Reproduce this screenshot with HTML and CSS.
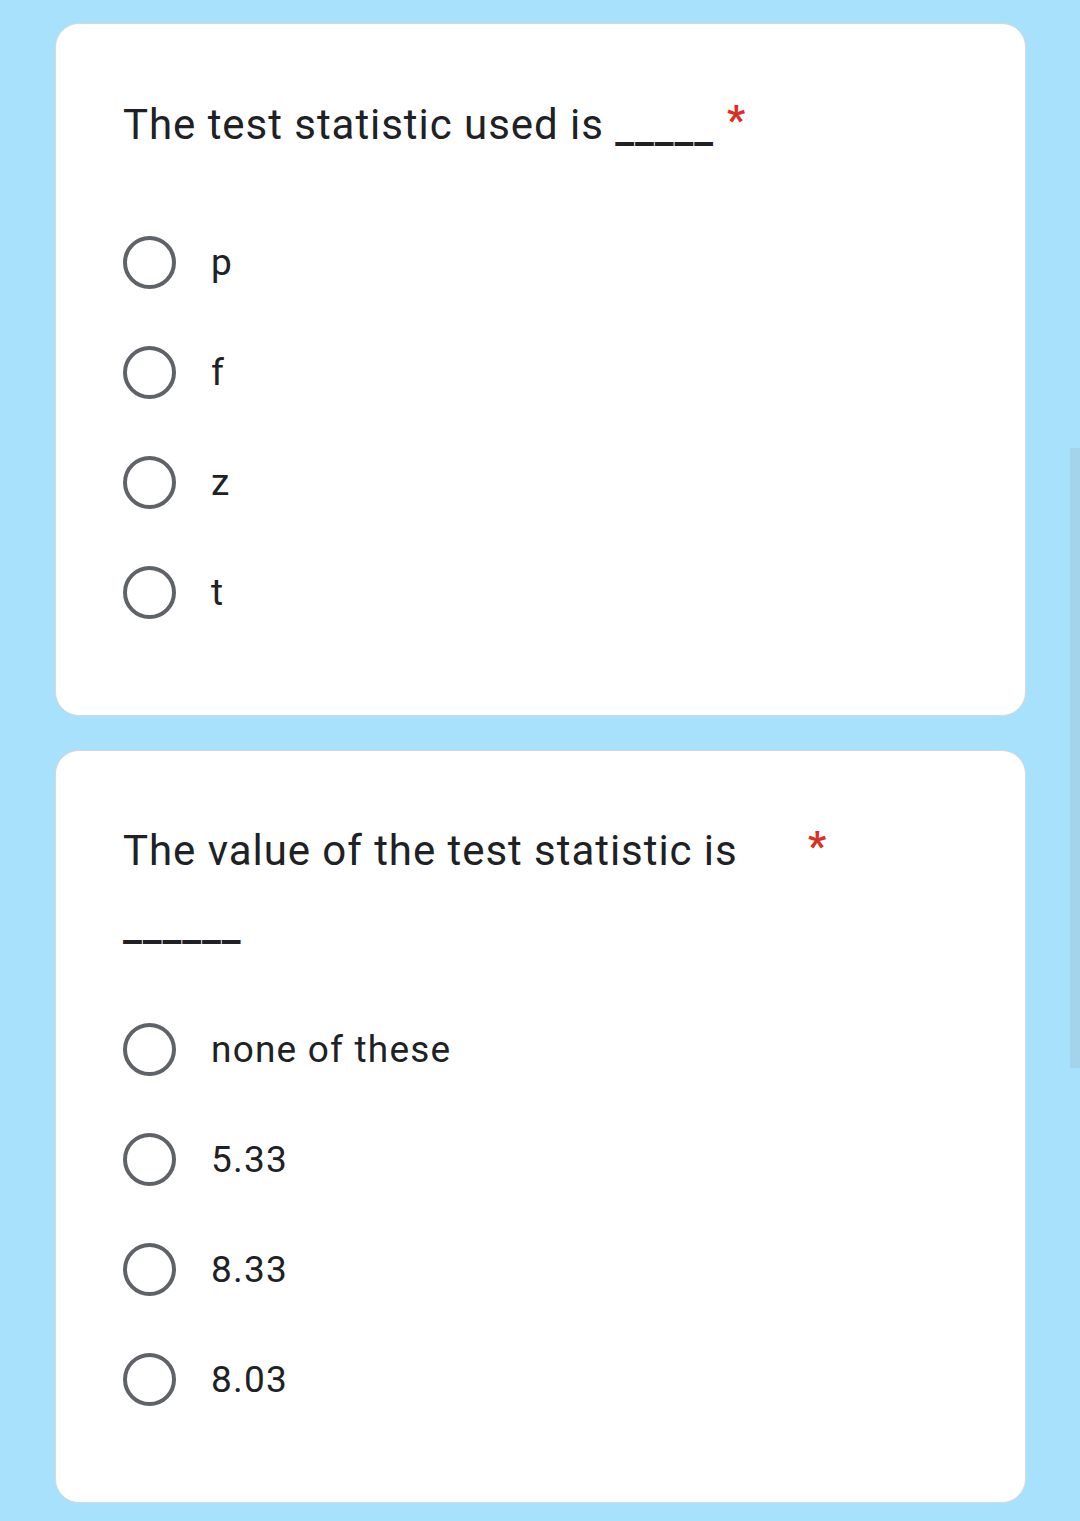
FILE: index.html
```html
<!DOCTYPE html>
<html>
<head>
<meta charset="utf-8">
<link rel="stylesheet" href="styles.css">
</head>
<body>
<div class="page">
  <div class="card">
    <div class="title-row">
      <div class="title">The test statistic used is <span class="blank">_____</span></div>
      <span class="req">*</span>
    </div>
    <div class="options">
      <div class="opt"><span class="radio"></span><span class="label">p</span></div>
      <div class="opt"><span class="radio"></span><span class="label">f</span></div>
      <div class="opt"><span class="radio"></span><span class="label">z</span></div>
      <div class="opt"><span class="radio"></span><span class="label">t</span></div>
    </div>
  </div>
  <div class="card">
    <div class="title-row">
      <div class="title">The value of the test statistic is <span class="blank">______</span></div>
      <span class="req">*</span>
    </div>
    <div class="options options-tight">
      <div class="opt"><span class="radio"></span><span class="label">none of these</span></div>
      <div class="opt"><span class="radio"></span><span class="label">5.33</span></div>
      <div class="opt"><span class="radio"></span><span class="label">8.33</span></div>
      <div class="opt"><span class="radio"></span><span class="label">8.03</span></div>
    </div>
  </div>
</div>
<div class="scrollbar"></div>
</body>
</html>
```

FILE: styles.css
```css
html, body {
  margin: 0;
  padding: 0;
}
body {
  background: #a8e1fb;
  width: 1080px;
  height: 1521px;
  overflow: hidden;
  position: relative;
  font-family: Roboto, "Noto Sans", sans-serif;
  color: #202124;
}
.page {
  padding: 23px 54px 0 55px;
  display: flex;
  flex-direction: column;
  gap: 34px;
}
.card {
  background: #fff;
  border: 1.5px solid #d5d9dd;
  border-radius: 24px;
  padding: 65px 0 68px 67px;
}
.card + .card {
  padding-top: 64px;
}
.title-row {
  display: flex;
  align-items: flex-start;
}
.title {
  max-width: 672px;
  font-size: 42px;
  line-height: 72px;
  letter-spacing: 0.95px;
}
.blank {
  font-weight: 500;
  position: relative;
  top: 3px;
}
.req {
  color: #d93025;
  font-size: 40px;
  font-weight: 700;
  line-height: 64px;
  margin-left: 13px;
}
.options {
  margin-top: 46px;
  display: flex;
  flex-direction: column;
}
.options-tight {
  margin-top: 35px;
}
.opt {
  height: 110px;
  display: flex;
  align-items: center;
}
.radio {
  width: 45px;
  height: 45px;
  border: 4.5px solid #5f6368;
  border-radius: 50%;
  flex: none;
}
.label {
  margin-left: 35px;
  font-size: 37px;
  letter-spacing: 1.2px;
}
.scrollbar {
  position: absolute;
  left: 1070px;
  top: 448px;
  width: 10px;
  height: 620px;
  background: #a3d4eb;
}
```
